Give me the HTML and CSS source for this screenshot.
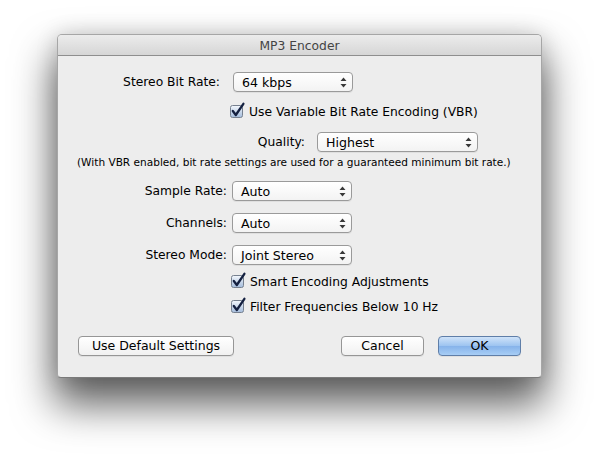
FILE: index.html
```html
<!DOCTYPE html>
<html lang="en">
<head>
<meta charset="utf-8">
<title>MP3 Encoder</title>
<link rel="stylesheet" href="styles.css">
</head>
<body>
<div class="window">
  <div class="titlebar">MP3 Encoder</div>
  <div class="content">
    <div class="field field-bitrate">
      <span class="label">Stereo Bit Rate:</span>
      <div class="popup popup-short">
        <span>64 kbps</span>
        <svg class="arrows" width="7" height="11" viewBox="0 0 7 11"><path d="M3.5 0.5 L6.5 4 L0.5 4 Z M3.5 10.5 L6.5 7 L0.5 7 Z"/></svg>
      </div>
    </div>

    <label class="check check-vbr">
      <svg class="box" width="16" height="17" viewBox="0 0 16 17"><defs><linearGradient id="cb1" x1="0" y1="0" x2="0" y2="1"><stop offset="0" stop-color="#f4f8fd"/><stop offset="1" stop-color="#a3bbdb"/></linearGradient></defs><rect x="0.5" y="3.5" width="12" height="12" rx="2" fill="url(#cb1)" stroke="#76808f"/><path d="M2.8 9 L5.8 13 L13.4 1.8" fill="none" stroke="#142040" stroke-width="2.3" stroke-linecap="round" stroke-linejoin="round"/></svg>
      <span>Use Variable Bit Rate Encoding (VBR)</span>
    </label>

    <div class="field field-quality">
      <span class="label">Quality:</span>
      <div class="popup popup-long">
        <span>Highest</span>
        <svg class="arrows" width="7" height="11" viewBox="0 0 7 11"><path d="M3.5 0.5 L6.5 4 L0.5 4 Z M3.5 10.5 L6.5 7 L0.5 7 Z"/></svg>
      </div>
    </div>

    <p class="note">(With VBR enabled, bit rate settings are used for a guaranteed minimum bit rate.)</p>

    <div class="field field-sample">
      <span class="label">Sample Rate:</span>
      <div class="popup popup-short">
        <span>Auto</span>
        <svg class="arrows" width="7" height="11" viewBox="0 0 7 11"><path d="M3.5 0.5 L6.5 4 L0.5 4 Z M3.5 10.5 L6.5 7 L0.5 7 Z"/></svg>
      </div>
    </div>

    <div class="field field-next">
      <span class="label">Channels:</span>
      <div class="popup popup-short">
        <span>Auto</span>
        <svg class="arrows" width="7" height="11" viewBox="0 0 7 11"><path d="M3.5 0.5 L6.5 4 L0.5 4 Z M3.5 10.5 L6.5 7 L0.5 7 Z"/></svg>
      </div>
    </div>

    <div class="field field-next">
      <span class="label">Stereo Mode:</span>
      <div class="popup popup-short">
        <span>Joint Stereo</span>
        <svg class="arrows" width="7" height="11" viewBox="0 0 7 11"><path d="M3.5 0.5 L6.5 4 L0.5 4 Z M3.5 10.5 L6.5 7 L0.5 7 Z"/></svg>
      </div>
    </div>

    <label class="check check-smart">
      <svg class="box" width="16" height="17" viewBox="0 0 16 17"><defs><linearGradient id="cb2" x1="0" y1="0" x2="0" y2="1"><stop offset="0" stop-color="#f4f8fd"/><stop offset="1" stop-color="#a3bbdb"/></linearGradient></defs><rect x="0.5" y="3.5" width="12" height="12" rx="2" fill="url(#cb2)" stroke="#76808f"/><path d="M2.8 9 L5.8 13 L13.4 1.8" fill="none" stroke="#142040" stroke-width="2.3" stroke-linecap="round" stroke-linejoin="round"/></svg>
      <span>Smart Encoding Adjustments</span>
    </label>

    <label class="check check-filter">
      <svg class="box" width="16" height="17" viewBox="0 0 16 17"><defs><linearGradient id="cb3" x1="0" y1="0" x2="0" y2="1"><stop offset="0" stop-color="#f4f8fd"/><stop offset="1" stop-color="#a3bbdb"/></linearGradient></defs><rect x="0.5" y="3.5" width="12" height="12" rx="2" fill="url(#cb3)" stroke="#76808f"/><path d="M2.8 9 L5.8 13 L13.4 1.8" fill="none" stroke="#142040" stroke-width="2.3" stroke-linecap="round" stroke-linejoin="round"/></svg>
      <span>Filter Frequencies Below 10 Hz</span>
    </label>

    <div class="buttons">
      <button class="btn btn-defaults">Use Default Settings</button>
      <div class="btn-group">
        <button class="btn btn-cancel">Cancel</button>
        <button class="btn btn-ok">OK</button>
      </div>
    </div>
  </div>
</div>
</body>
</html>
```

FILE: styles.css
```css
html, body {
  margin: 0;
  padding: 0;
  background: #ffffff;
}

body {
  font-family: "DejaVu Sans", "Liberation Sans", sans-serif;
  font-size: 12.3px;
  color: #000;
  padding: 34px 0 0 57px;
  height: 457px;
  box-sizing: border-box;
  overflow: hidden;
}

/* dialog window */
.window {
  width: 485px;
  height: 344px;
  box-sizing: border-box;
  background: #ededed;
  border: 1px solid #a6a6a6;
  border-bottom-color: #7a7a7a;
  border-radius: 5px 5px 4px 4px;
  box-shadow:
    0 0 22px rgba(0, 0, 0, 0.14),
    0 24px 40px 3px rgba(0, 0, 0, 0.62);
  display: flex;
  flex-direction: column;
  overflow: hidden;
}

.titlebar {
  height: 21px;
  flex: none;
  box-sizing: border-box;
  border-bottom: 1px solid #8e8e8e;
  background: linear-gradient(#ececec, #d6d6d6);
  color: #444;
  font-size: 12.3px;
  line-height: 21px;
  text-align: center;
  padding-top: 1px;
}

.content {
  flex: 1;
  display: flex;
  flex-direction: column;
}

/* label + popup rows */
.field {
  display: flex;
  align-items: center;
  height: 20px;
}

.label {
  flex: none;
  width: 169px;
  text-align: right;
  margin-right: 5px;
  white-space: nowrap;
}

.field-bitrate { margin-top: 16px; }
.field-bitrate .label { width: 162px; margin-right: 13px; }

.field-quality { margin-top: 11px; }
.field-quality .label { width: 247px; margin-right: 12px; }

.field-sample { margin-top: 12px; }
.field-next { margin-top: 12px; }

.popup {
  height: 20px;
  box-sizing: border-box;
  border: 1px solid #9a9a9a;
  border-radius: 4px;
  background: linear-gradient(#ffffff, #f3f3f3);
  box-shadow: 0 1px 0 rgba(0, 0, 0, 0.06);
  display: flex;
  align-items: center;
  justify-content: space-between;
  padding: 0 5px 0 8px;
  white-space: nowrap;
  font-size: 12.6px;
}

.popup-short { width: 120px; }
.popup-long { width: 161px; }

.arrows {
  fill: #3a3a3a;
  flex: none;
}

/* checkbox rows */
.check {
  display: flex;
  align-items: center;
  height: 18px;
  white-space: nowrap;
}

.check .box {
  flex: none;
  margin-right: 3px;
  margin-top: -3px;
}

.check-vbr { margin-top: 11px; padding-left: 172px; }
.check-smart { margin-top: 8px; padding-left: 173px; }
.check-filter { margin-top: 7px; padding-left: 173px; }

.note {
  margin: 3px 0 0 0;
  padding-left: 19px;
  height: 14px;
  line-height: 14px;
  font-size: 10.55px;
  white-space: nowrap;
}

/* push buttons */
.buttons {
  margin-top: 20px;
  padding: 0 20px;
  display: flex;
  justify-content: space-between;
}

.btn-group {
  display: flex;
  gap: 14px;
}

.btn {
  font-family: inherit;
  font-size: 12.5px;
  color: #000;
  height: 20px;
  padding: 0;
  box-sizing: border-box;
  border: 1px solid #969696;
  border-radius: 4px;
  background: linear-gradient(#ffffff, #f1f1f1);
  box-shadow: 0 1px 0 rgba(0, 0, 0, 0.06);
  line-height: 18px;
}

.btn-defaults { width: 156px; }
.btn-cancel { width: 83px; }

.btn-ok {
  width: 83px;
  border-color: #5f7ea8;
  background: linear-gradient(#cfe3f9, #9cc3f0 50%, #86b3ea 51%, #a7cdf5);
}
```
